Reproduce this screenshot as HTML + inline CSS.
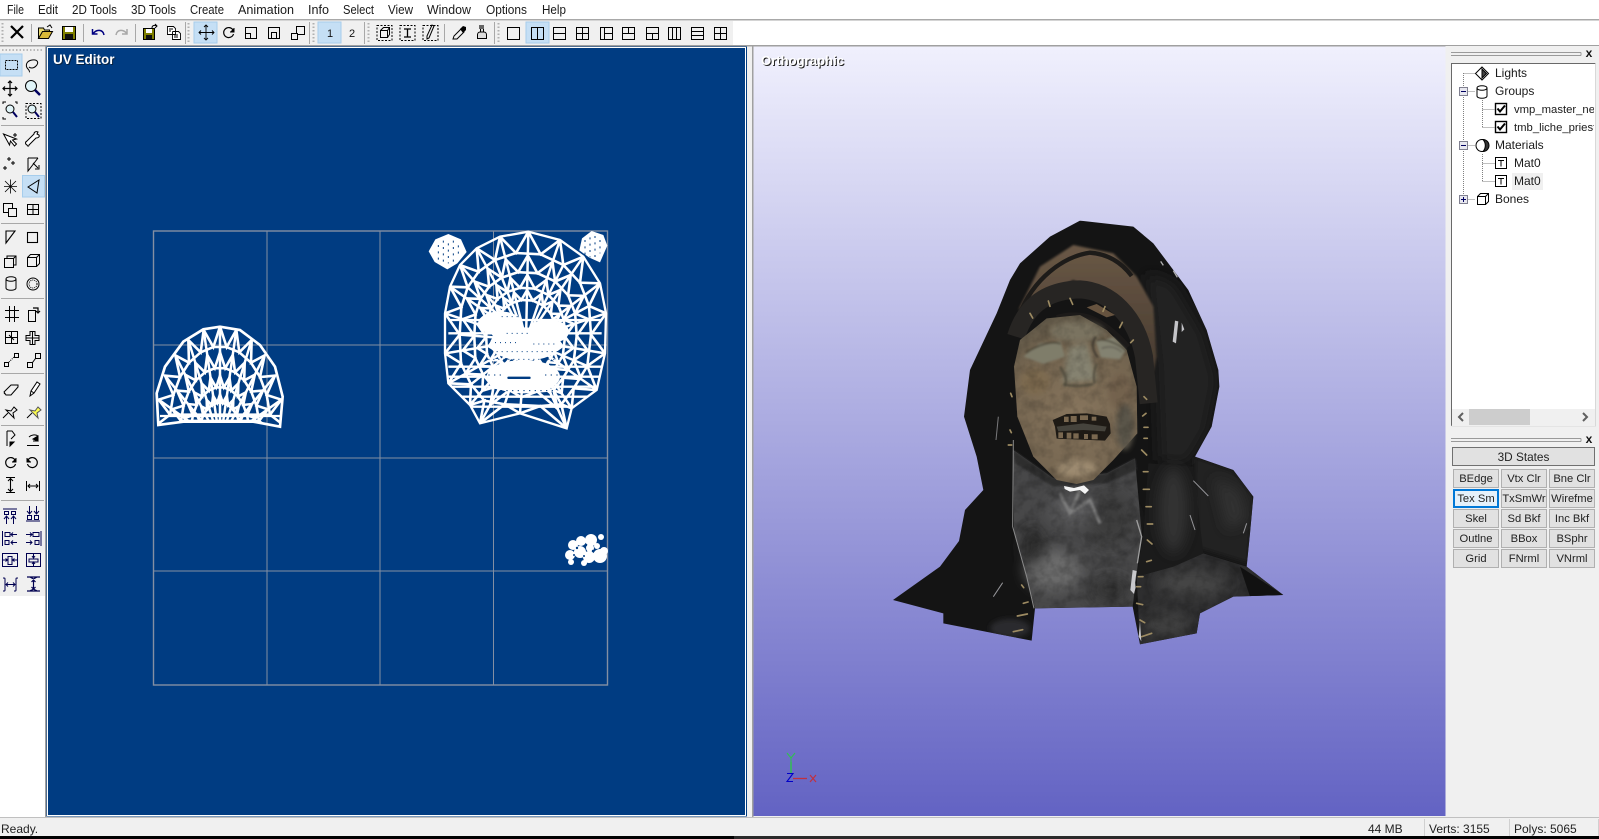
<!DOCTYPE html>
<html><head><meta charset="utf-8"><style>
html,body{margin:0;padding:0;background:#f0f0f0;width:1599px;height:839px;overflow:hidden}
svg{display:block;font-family:"Liberation Sans",sans-serif}
.m{font-size:12.5px;fill:#1a1a1a}
.t{font-size:12px;fill:#1a1a1a}
.s{font-size:11.3px;fill:#1a1a1a}
.b{font-size:11.2px;fill:#222;text-anchor:middle}
.i{fill:none;stroke:#000;stroke-width:1}
</style></head><body>
<svg width="1599" height="839" viewBox="0 0 1599 839" xmlns="http://www.w3.org/2000/svg">
<defs>
<linearGradient id="bg" x1="0" y1="0" x2="0" y2="1"><stop offset="0" stop-color="#f0f0fd"/><stop offset="1" stop-color="#6363c3"/></linearGradient>
<linearGradient id="brown" x1="0" y1="0" x2="0" y2="1"><stop offset="0" stop-color="#6a5846"/><stop offset="1" stop-color="#40352b"/></linearGradient>
<radialGradient id="face" gradientUnits="userSpaceOnUse" cx="410" cy="640" r="320"><stop offset="0" stop-color="#87755d"/><stop offset=".65" stop-color="#746550"/><stop offset="1" stop-color="#5c5546"/></radialGradient>
<filter id="b3" x="-30%" y="-30%" width="160%" height="160%"><feGaussianBlur stdDeviation="3"/></filter>
<filter id="b8" x="-30%" y="-30%" width="160%" height="160%"><feGaussianBlur stdDeviation="8"/></filter>
<filter id="b20" x="-60%" y="-60%" width="220%" height="220%"><feGaussianBlur stdDeviation="20"/></filter>
<filter id="noise" x="0" y="0" width="100%" height="100%"><feTurbulence type="fractalNoise" baseFrequency=".03" numOctaves="3" seed="4"/><feColorMatrix values="0 0 0 0 0  0 0 0 0 0  0 0 0 0 0  2.4 0 0 0 -.95"/></filter>
<clipPath id="sil"><polygon points="420,62 580,80 640,130 700,210 745,270 800,390 835,510 838,560 815,680 765,770 880,810 940,890 930,1000 920,1100 1030,1185 880,1190 780,1240 770,1300 600,1333 578,1220 285,1225 275,1322 10,1270 10,1240 -141,1200 0,1100 57,1023 75,930 130,870 110,770 72,650 90,510 170,340 210,240 240,190 330,110"/></clipPath>
<clipPath id="fc"><polygon points="240,420 320,355 420,345 500,390 560,450 590,560 592,700 520,780 460,840 410,852 350,840 280,770 232,650 222,500"/></clipPath>
<clipPath id="cc"><polygon points="220,750 340,835 500,820 585,775 605,1000 578,1220 285,1225 250,1100 222,1000"/></clipPath>
<clipPath id="dc"><polygon points="590,1130 700,1100 790,1060 920,1100 1030,1185 880,1190 780,1240 770,1300 600,1333"/></clipPath>
<clipPath id="faceclip"><polygon points="325,35 240,50 170,85 120,135 90,200 75,280 75,400 85,490 150,555 180,610 300,580 440,625 455,565 530,510 555,400 558,280 540,190 490,110 420,60"/></clipPath>
<clipPath id="domeclip"><polygon points="55,345 50,250 75,170 130,95 190,58 240,50 300,60 360,105 405,170 428,260 420,350 340,335 240,335 130,335"/></clipPath>
<clipPath id="treeclip"><rect x="1452" y="64" width="142" height="345"/></clipPath>
<path id="dz" fill="none" stroke="#fff" stroke-width="2.600" vector-effect="non-scaling-stroke" d="M50 345L90 314L56 269L100 255L75 197L120 201L106 136L147 158L145 90L182 127L191 60L220 111L240 50L260 111L289 60L298 127L335 90L333 158L374 136L360 201L405 197L380 255L424 269L390 314L430 345"/>
<polygon id="do" points="90,314 100,255 120,201 147,158 182,127 220,111 260,111 298,127 333,158 360,201 380,255 390,314" fill="none" stroke="#fff" stroke-width="2.600" vector-effect="non-scaling-stroke"/>
<path id="fz" fill="none" stroke="#fff" stroke-width="2.600" vector-effect="non-scaling-stroke" d="M325 35L288 99L240 50L225 120L170 85L176 155L120 135L143 202L90 200L124 262L75 280L119 344L75 400L123 430L85 490L153 493L150 555L193 542L180 610L254 553L300 580L361 558L440 625L424 553L455 565L461 505L530 510L502 438L555 400L513 344L558 280L507 258L540 190L480 188L490 110L430 135L420 60L362 103Z"/>
<polygon id="fo" points="288,99 225,120 176,155 143,202 124,262 119,344 123,430 153,493 193,542 254,553 361,558 424,553 461,505 502,438 513,344 507,258 480,188 430,135 362,103" fill="none" stroke="#fff" stroke-width="2.600" vector-effect="non-scaling-stroke"/>
</defs>

<rect width="1599" height="839" fill="#f0f0f0"/>
<!-- menu -->
<rect width="1599" height="45" fill="#fff"/>
<rect y="19" width="1599" height="1.5" fill="#a8a8a8"/>
<g>
<text x="7" y="14" class="m" textLength="17" lengthAdjust="spacingAndGlyphs">File</text><text x="38" y="14" class="m" textLength="20" lengthAdjust="spacingAndGlyphs">Edit</text><text x="72" y="14" class="m" textLength="45" lengthAdjust="spacingAndGlyphs">2D Tools</text><text x="131" y="14" class="m" textLength="45" lengthAdjust="spacingAndGlyphs">3D Tools</text><text x="190" y="14" class="m" textLength="34" lengthAdjust="spacingAndGlyphs">Create</text><text x="238" y="14" class="m" textLength="56" lengthAdjust="spacingAndGlyphs">Animation</text><text x="308" y="14" class="m" textLength="21" lengthAdjust="spacingAndGlyphs">Info</text><text x="343" y="14" class="m" textLength="31" lengthAdjust="spacingAndGlyphs">Select</text><text x="388" y="14" class="m" textLength="25" lengthAdjust="spacingAndGlyphs">View</text><text x="427" y="14" class="m" textLength="44" lengthAdjust="spacingAndGlyphs">Window</text><text x="486" y="14" class="m" textLength="41" lengthAdjust="spacingAndGlyphs">Options</text><text x="542" y="14" class="m" textLength="24" lengthAdjust="spacingAndGlyphs">Help</text>
</g>
<!-- top toolbar -->
<rect y="21" width="733" height="24" fill="#f0f0f0"/>
<rect y="45" width="1599" height="1.5" fill="#a0a0a0"/>
<rect x="194" y="22" width="23" height="21" fill="#c5dff5" stroke="#a6cdec"/>
<rect x="318" y="22" width="23" height="21" fill="#c5dff5" stroke="#a6cdec"/>
<rect x="526" y="22" width="23" height="21" fill="#c5dff5" stroke="#a6cdec"/>
<g fill="#a8a8a8"><rect x="31" y="24" width="1" height="18"/><rect x="83" y="24" width="1" height="18"/><rect x="135" y="24" width="1" height="18"/><rect x="185" y="22" width="1" height="22"/><rect x="309" y="22" width="1" height="22"/><rect x="364" y="22" width="1" height="22"/><rect x="444" y="24" width="1" height="18"/><rect x="494" y="22" width="1" height="22"/></g>
<path d="M2.5 23V43M188.5 23V43M313.5 23V43M368.5 23V43M498.5 23V43" stroke="#b0b0b0" stroke-width="2" stroke-dasharray="1.5 2"/>
<path d="M11 26L23 38M23 26L11 38" stroke="#000" stroke-width="2.2"/>
<path d="M38.5 38.5V28h5l1 2h5v2" fill="#e8d870" stroke="#000"/><path d="M38.5 38.5l4-7h10l-4 7z" fill="#d8b838" stroke="#000"/><path d="M47 27l3-2 2 3" fill="none" stroke="#000"/>
<rect x="62.5" y="26.5" width="13" height="13" fill="#808000" stroke="#000"/><rect x="65" y="27" width="8" height="5" fill="#fff"/><rect x="65" y="34" width="8" height="5" fill="#111"/>
<path d="M92.5 29v5h5M93 34c3-5 10-5 11 1" fill="none" stroke="#000080" stroke-width="1.5"/>
<path d="M127 29v5h-5M127 34c-3-5-10-5-11 1" fill="none" stroke="#a8a8a8" stroke-width="1.5"/>
<rect x="143.5" y="28.5" width="11" height="11" fill="#808000" stroke="#000"/><rect x="146" y="29" width="6" height="4" fill="#fff"/><rect x="146" y="35" width="6" height="4" fill="#111"/><path d="M152 28c0-3 3-3 5-2M155 24l2 2-2 2" fill="none" stroke="#000"/>
<path d="M167.5 26.5h6l2 2v6h-8zM172.5 31.5h6l2 2v6h-8v-8M169 29h4M169 31h2M174 35h4M174 37h4" fill="#fff" stroke="#000" stroke-width=".9"/>
<g class="i"><path d="M206 25V40M199 32.5H214M204 27l2-2 2 2M204 38l2 2 2-2M201 30.5l-2 2 2 2M212 30.5l2 2-2 2" stroke-width=".9"/>
<path d="M233 30a5 5 0 1 0 .5 4" stroke-width="1.200"/><path d="M234 28v4h-4" fill="#000"/>
<rect x="245.5" y="27.5" width="11" height="11"/><path d="M245.5 33.5h5v5"/>
<rect x="268.5" y="27.5" width="11" height="11"/><rect x="271.5" y="32.5" width="5" height="6"/>
<rect x="296.5" y="26.5" width="8" height="8"/><rect x="291.5" y="33.5" width="6" height="6" fill="#f0f0f0"/>
</g>
<text x="330" y="37" font-size="11" text-anchor="middle" fill="#111">1</text><text x="352" y="37" font-size="11" text-anchor="middle" fill="#111">2</text>
<g class="i"><rect x="377" y="25.5" width="15" height="15" stroke-dasharray="2 1.5"/><rect x="380.5" y="30.5" width="7" height="7"/><path d="M380.5 30.5l3-3h6v7l-2 3M387.5 30.5l2-3"/>
<rect x="400" y="25.5" width="15" height="15" stroke-dasharray="2 1.5"/><path d="M404 29h7M404 37h7M407.5 29v8" stroke-width="1.3"/>
<rect x="423" y="25.5" width="15" height="15" stroke-dasharray="2 1.5"/><path d="M434 26l-5 12-2 1v-3l5-11z" stroke-width="1"/>
<path d="M453 39l1-3 7-7 3 3-7 7z"/></g>
<path d="M460 29l3-3 3 1 0 3-3 3z" fill="#000"/>
<path d="M480.5 27h3v5h-3zM477.5 38.5v-4c0-2 2-2.500 2.500-2.500h4c.5 0 2.500.5 2.500 2.500v4z" fill="#dcdcdc" stroke="#000"/><rect x="479" y="25" width="5" height="4" fill="#666"/>
<!-- layouts -->
<g class="i" stroke-width="1.1"><rect x="507.500" y="27.500" width="12" height="12"/>
<rect x="531.500" y="27.500" width="12" height="12"/><path d="M537.500 27.500v12"/>
<rect x="553.500" y="27.500" width="12" height="12"/><path d="M553.500 33.500h12"/>
<rect x="576.500" y="27.500" width="12" height="12"/><path d="M582.500 27.500v12M576.500 33.500h12"/>
<rect x="600.500" y="27.500" width="12" height="12"/><path d="M604.500 27.500v12M604.500 33.500h8"/>
<rect x="622.500" y="27.500" width="12" height="12"/><path d="M628.500 27.500v6M622.500 33.500h12"/>
<rect x="646.500" y="27.500" width="12" height="12"/><path d="M646.500 33.500h12M652.500 33.500v6"/>
<rect x="668.500" y="27.500" width="12" height="12"/><path d="M672.500 27.500v12M676.500 27.500v12"/>
<rect x="691.500" y="27.500" width="12" height="12"/><path d="M691.500 31.500h12M691.500 35.500h12"/>
<rect x="714.500" y="27.500" width="12" height="12"/><path d="M720.500 27.500v12M714.500 33.500h12"/></g>

<!-- left toolbar -->
<rect x="0" y="47" width="45" height="549" fill="#f0f0f0"/>
<rect x="0" y="596" width="45" height="222" fill="#fff"/>
<rect x="45" y="46" width="1.500" height="772" fill="#a0a0a0"/>
<path d="M2 50H43" stroke="#b8b8b8" stroke-width="2" stroke-dasharray="1.500 2"/>
<rect x="0" y="54" width="22" height="22" fill="#c5dff5" stroke="#a6cdec"/>
<rect x="22.500" y="175.500" width="22" height="21.500" fill="#c5dff5" stroke="#a6cdec"/>
<g fill="#a8a8a8"><rect x="1" y="125" width="43" height="1"/><rect x="1" y="223" width="43" height="1"/><rect x="1" y="298" width="43" height="1"/><rect x="1" y="373" width="43" height="1"/><rect x="1" y="425" width="43" height="1"/><rect x="1" y="500" width="43" height="1"/></g>
<g class="i" stroke-width=".9">
<rect x="5.500" y="60.500" width="12" height="9" stroke-dasharray="2 1"/>
<path d="M28 69c-3-3-2-8 4-9s7 3 4 6-6 2-7 1M28 69c1 1 2 3 1 3"/>
<path d="M10 81V96M3 88.500H17M8 83l2-2 2 2M8 94l2 2 2-2M5 86.500l-2 2 2 2M15 86.500l2 2-2 2" stroke-width="1.200"/>
<circle cx="31" cy="86" r="5.500" fill="#e0f4f8"/><path d="M35 90l5 5" stroke="#000060" stroke-width="2.500"/>
<path d="M3 104v-2h3M15 102h2v2M3 117v2h3"/><circle cx="10" cy="109" r="4" fill="#e0f4f8"/><path d="M13 112l4 5" stroke="#000060" stroke-width="2"/>
<rect x="26" y="103.500" width="15" height="15" stroke-dasharray="2 1.500"/><circle cx="32" cy="109" r="4" fill="#e0f4f8"/><path d="M35 112l4 5" stroke="#000060" stroke-width="2"/>
<path d="M3.500 134l6 11 1-4 4 5 2-2-4-4 4-1z" fill="#fff"/><path d="M13 135h4M15 133v4"/>
<path d="M27 145c-2-1-2-3 0-4l7-7c0-2 2-3 4-2l-1 2 2 1c1 2-1 3-3 3l-7 7c0 1-1 2-2 0z" fill="#fff"/>
<path d="M9 157v4M7 159h4M13 161v4M11 163h4M5 166v4M3 168h4" stroke-width="1"/>
<path d="M28 158h10M28 158v13l10-13M33 163l5 5M35 169h4v-4" stroke-width="1"/>
<path d="M5 181l11 11M16 181L5 192M10.500 179.500v14M4 186.500h13" stroke-width=".8"/>
<path d="M28 187l11-7-2 13z"/>
<rect x="3.500" y="203.500" width="9" height="9" fill="none"/><rect x="8.500" y="208.500" width="8" height="8" fill="#f0f0f0"/>
<rect x="27.500" y="204.500" width="11" height="10"/><path d="M33 204.500v10M27.500 209.500h11"/>
<path d="M6 243l9-12H6z" stroke-width="1.100"/><rect x="27.500" y="232.500" width="10" height="10" stroke-width="1.100"/>
<rect x="4.500" y="258.500" width="9" height="9"/><path d="M7 258.500v-2.500h9v9h-2.500M13.500 258.500l2.500-2.500" /><rect x="27.500" y="257.500" width="9" height="9"/><path d="M27.500 257.500l3-3h9v9l-3 3M36.500 257.500l3-3"/>
<path d="M6 279c0-3 10-3 10 0v9c0 3-10 3-10 0zM6 279c0 3 10 3 10 0"/><circle cx="33" cy="284" r="6"/><circle cx="33" cy="284" r="4" stroke-dasharray="1 1" />
<path d="M9.500 306v16M14.500 306v16M5 310.500h14M5 317.500h14"/>
<rect x="28.500" y="310.500" width="7" height="11"/><path d="M33 308h5v4M36 311l2 2 2-2" stroke-width="1.200"/>
<rect x="5.500" y="331.500" width="12" height="12"/><path d="M11.500 331.500v12M5.500 337.500h12M9 335l5 5"/>
<path d="M30 331.500h5v4h4v5h-4v4h-5v-4h-4v-5h4zM32.500 331.500v13M26 338h13"/>
<rect x="4.500" y="362.500" width="4" height="4"/><rect x="14.500" y="353.500" width="4" height="4"/><path d="M9 362l5-5" stroke-dasharray="1 1"/>
<rect x="27.500" y="362.500" width="5" height="5"/><rect x="35.500" y="353.500" width="5" height="5"/><path d="M32.500 362.500l3-4"/>
<path d="M4 392l7-7h7v2l-7 8H6z"/><path d="M4 393l1 1"/>
<path d="M30 396l1-5 6-9 3 2-6 9z" fill="#fff"/><path d="M31 391l3 2"/>
<path d="M3 418l5-5M6 410l5 1 3-4 3 3-4 3 1 5z"/>
<path d="M27 418l5-5" /><path d="M30 410l5 1 3-4 3 3-4 3 1 5z" fill="#ffff50" stroke="#555"/>
<path d="M7 431v15M7 431h5l3 4-4 4"/><path d="M14 442l-4 4v-4z" fill="#000" /><path d="M27 445.500h12M29 437c2-2 6-3 9-1v5h-5"/><path d="M38 441l-5-2 5-3z" fill="#000"/>
<path d="M15 460a5 5 0 1 0 .5 4" stroke-width="1.200"/><path d="M16 458v4h-4" fill="#000"/>
<path d="M28 460a5 5 0 1 1 -.5 4" stroke-width="1.200"/><path d="M27 458v4h4" fill="#000"/>
<path d="M6 477.500h9M6 492.500h9M10.500 479v12M8 481l2.500-2.500L13 481M8 489l2.500 2.500L13 489" stroke-width="1.100"/>
<path d="M26.500 481v10M39.500 481v10M28 486h10M30 484l-2 2 2 2M36 484l2 2-2 2" stroke="#000" stroke-width="1"/>
</g>
<g fill="none" stroke="#000050" stroke-width="1">
<path d="M3 509h14M4.500 511.500h4v3h-4zM11.500 511.500h4v3h-4zM6.500 524v-7M4 519l2.500-3 2.500 3M13.500 524v-7M11 519l2.500-3 2.500 3"/>
<path d="M26 521h14M27.500 515.500h4v4h-4zM34.500 515.500h4v4h-4zM29.500 506v7M27 511l2.500 3 2.500-3M36.500 506v7M34 511l2.500 3 2.500-3"/>
<path d="M2.500 531v15M5 532.500h5v4H5zM5 540.500h4v4H5zM17 534.500h-6M13 532.500l-2 2 2 2M17 542.500h-6M13 540.500l-2 2 2 2"/>
<path d="M41 531v15M33 532.500h6v4h-6zM35 540.500h4v4h-4zM26 534.500h6M30 532.500l2 2-2 2M26 542.500h6M30 540.500l2 2-2 2"/>
<rect x="2.500" y="553.500" width="15" height="13"/><rect x="8" y="556.500" width="4" height="8"/><path d="M3 560h4M5.500 558.500l2 1.500-2 1.500M17 560h-4M14.500 558.500l-2 1.500 2 1.500"/>
<rect x="26.500" y="553.500" width="14" height="13"/><path d="M29 559h9v3h-9zM33.500 554v4M32 556l1.500 2 1.500-2M33.500 566v-4M32 564l1.500-2 1.500 2"/>
<path d="M3 578c2 0 2 0 2 1v11c0 1 0 1-2 1M18 578c-2 0-2 0-2 1v11c0 1 0 1-2 1M6 584.500h9M8 582.500l-2 2 2 2M13 582.500l2 2-2 2"/>
<path d="M27 577h13M27 591h13M30 577c1 1 3 1 3 2M37 577c-1 1-3 1-3 2M33.500 580v9M31.500 582l2-2 2 2M31.500 587l2 2 2-2M30 591c1-1 3-1 3-2M37 591c-1-1-3-1-3-2" stroke-width="1.200"/>
</g>

<!-- UV editor -->
<rect x="46.500" y="46.500" width="700.500" height="770" fill="#003c82"/>
<rect x="47.500" y="47.500" width="698" height="768" fill="none" stroke="#fff"/>
<text x="53" y="64" font-size="13.500" font-weight="bold" fill="#111" transform="translate(1 1)" opacity=".6">UV Editor</text>
<text x="53" y="64" font-size="13.500" font-weight="bold" fill="#fff">UV Editor</text>
<g stroke="#838fa3" fill="none"><rect x="153.500" y="231" width="454" height="454" stroke-width="1.400"/><path d="M267 231V685M380 231V685M493.500 231V685M153 345H607M153 458H607M153 571H607" stroke-width="1"/></g>

<!-- small dome -->
<g transform="translate(140,310) scale(.33333)">
<g clip-path="url(#domeclip)">
<path fill="none" stroke="#fff" stroke-width="7.500" d="M240 400L50 345M240 400L56 269M240 400L75 197M240 400L106 136M240 400L145 90M240 400L191 60M240 400V50M240 400L289 60M240 400L335 90M240 400L374 136M240 400L405 197M240 400L424 269M240 400L430 345"/>
<use href="#dz"/>
<use href="#do"/>
<use href="#dz" transform="translate(240 400) scale(.78) translate(-240 -400)"/>
<use href="#do" transform="translate(240 400) scale(.78) translate(-240 -400)"/>
<use href="#dz" transform="translate(240 400) scale(.58) translate(-240 -400)"/>
<use href="#do" transform="translate(240 400) scale(.58) translate(-240 -400)"/>
<use href="#dz" transform="translate(240 400) scale(.42) translate(-240 -400)"/>
<use href="#do" transform="translate(240 400) scale(.42) translate(-240 -400)"/>
<path d="M60 318H420" stroke="#fff" stroke-width="7"/>
</g>
<polygon points="55,345 50,250 75,170 130,95 190,58 240,50 300,60 360,105 405,170 428,260 420,350 340,335 240,335 130,335" fill="none" stroke="#fff" stroke-width="8"/>
</g>

<!-- face mesh -->
<g transform="translate(420,220) scale(.33333)">
<g clip-path="url(#faceclip)">
<path fill="none" stroke="#fff" stroke-width="7.500" d="M318 360L325 35M318 360L240 50M318 360L170 85M318 360L120 135M318 360L90 200M318 360L75 280M318 360L75 400M318 360L85 490M318 360L150 555M318 360L180 610M318 360L300 580M318 360L440 625M318 360L455 565M318 360L530 510M318 360L555 400M318 360L558 280M318 360L540 190M318 360L490 110M318 360L420 60M318 360L225 120M318 360L143 202M318 360L119 344M318 360L153 493M318 360L254 553M318 360L424 553M318 360L502 438M318 360L507 258M318 360L430 135"/>
<use href="#fz"/>
<use href="#fo"/>
<use href="#fz" transform="translate(318 360) scale(.78) translate(-318 -360)"/>
<use href="#fo" transform="translate(318 360) scale(.78) translate(-318 -360)"/>
<use href="#fz" transform="translate(318 360) scale(.6) translate(-318 -360)"/>
<use href="#fo" transform="translate(318 360) scale(.6) translate(-318 -360)"/>
<use href="#fz" transform="translate(318 360) scale(.46) translate(-318 -360)"/>
<use href="#fo" transform="translate(318 360) scale(.46) translate(-318 -360)"/>
<path d="M85 300H545M85 340H545M85 440H545M85 470H545M90 500H540M110 530H510M140 560H470" stroke="#fff" stroke-width="7"/>
<ellipse cx="240" cy="310" rx="66" ry="36" fill="#fff"/>
<ellipse cx="385" cy="335" rx="62" ry="36" fill="#fff"/>
<ellipse cx="315" cy="372" rx="105" ry="50" fill="#fff"/>
<ellipse cx="310" cy="470" rx="110" ry="50" fill="#fff"/>
<path d="M215 395H420M205 418H430M225 368H300M340 372H410M245 290H300M260 340H330" stroke="#003c82" stroke-width="3" stroke-dasharray="3 12" fill="none"/>
<path d="M225 512H400M375 465H415M205 465H245" stroke="#003c82" stroke-width="3" stroke-dasharray="4 13" fill="none"/>
</g>
<polygon points="325,35 240,50 170,85 120,135 90,200 75,280 75,400 85,490 150,555 180,610 300,580 440,625 455,565 530,510 555,400 558,280 540,190 490,110 420,60" fill="none" stroke="#fff" stroke-width="7"/>
<rect x="262" y="470" width="70" height="7" rx="3" fill="#003c82"/>
<path d="M85 42l38 16 17 38-28 34-30 18-38-22-18-32 20-36z" fill="#fff"/>
<path d="M515 33l35 12 12 32-22 50-32-14-30-22 8-36z" fill="#fff"/>
<g stroke="#003c82" stroke-width="3" stroke-dasharray="6 13"><path d="M55 75v50M70 62v70M85 70v60M100 62v66M115 76v36M495 60v50M510 52v60M525 48v65M540 60v40"/></g>
</g>
<g fill="#fff"><circle cx="573" cy="545" r="5"/><circle cx="581" cy="541" r="5"/><circle cx="591" cy="540" r="6"/><circle cx="601" cy="537" r="3"/><circle cx="570" cy="555" r="5"/><circle cx="580" cy="552" r="6"/><circle cx="589" cy="557" r="6"/><circle cx="600" cy="556" r="7"/><circle cx="604" cy="551" r="4"/><circle cx="590" cy="548" r="4"/><circle cx="571" cy="562" r="3"/><circle cx="584" cy="563" r="3"/><circle cx="597" cy="546" r="3"/></g>
<g fill="#003c82"><circle cx="577" cy="548" r="1.200"/><circle cx="586" cy="545" r="1.200"/><circle cx="574" cy="555" r="1"/><circle cx="593" cy="551" r="1.200"/><circle cx="584" cy="556" r="1"/></g>

<!-- ortho -->
<rect x="752" y="46" width="1.500" height="771" fill="#a0a0a0"/>
<rect x="753.500" y="46.500" width="692" height="769.500" fill="url(#bg)"/>
<text x="762" y="66" font-size="13" font-weight="bold" fill="#222" textLength="83" lengthAdjust="spacingAndGlyphs">Orthographic</text>
<text x="761" y="65" font-size="13" font-weight="bold" fill="#fff" textLength="83" lengthAdjust="spacingAndGlyphs">Orthographic</text>

<!-- head -->
<g transform="translate(940,200) scale(.33333)">
<g clip-path="url(#sil)">
<rect x="-200" y="0" width="1300" height="1400" fill="#141414"/>
<polygon points="620,220 700,250 790,400 830,540 800,690 740,790 660,780 650,500" fill="#222223" filter="url(#b20)"/>
<polygon points="765,770 880,810 940,890 925,1090 760,1040" fill="#232323" filter="url(#b8)"/>
<polygon points="820,830 900,870 925,960 860,990" fill="#323232" filter="url(#b20)"/>
<!-- brown -->
<polygon points="235,330 300,200 400,135 520,160 590,230 640,320 650,470 625,590 600,400 500,290 400,240 280,300" fill="url(#brown)" filter="url(#b3)"/>
<path d="M238 345C280 235 370 170 450 158C505 162 545 188 575 228" fill="none" stroke="#1d1b19" stroke-width="13"/>
<!-- face-band -->
<path d="M228 410C262 300 340 270 420 268C510 272 590 350 612 470L626 610" fill="none" stroke="#272523" stroke-width="54"/>
<polygon points="440,322 470,312 525,345 500,352" fill="#66533f"/>
<path d="M350 352C420 332 480 345 565 440" fill="none" stroke="#1c1a19" stroke-width="14"/>
<!-- chest -->
<polygon points="220,750 340,835 500,820 585,775 605,1000 578,1220 285,1225 250,1100 222,1000" fill="#484849"/>
<g filter="url(#b20)"><ellipse cx="340" cy="1110" rx="85" ry="60" fill="#6c6c6c"/><ellipse cx="510" cy="960" rx="70" ry="80" fill="#3c3c3e"/><ellipse cx="280" cy="1040" rx="35" ry="60" fill="#2a2a2b"/><ellipse cx="400" cy="930" rx="70" ry="40" fill="#5e5e60"/><ellipse cx="510" cy="1170" rx="60" ry="40" fill="#343436"/></g>
<path d="M360 880l30 60 60-40 30 70M420 870l-30 70" fill="none" stroke="#7e7e7e" stroke-width="9" filter="url(#b3)"/>
<polygon points="220,750 340,835 500,820 585,775 590,810 500,850 340,860 225,790" fill="#2d2d2f" filter="url(#b3)"/>
<g clip-path="url(#cc)"><rect x="220" y="770" width="390" height="460" filter="url(#noise)" opacity=".22"/></g>
<path d="M220 720L218 980 260 1130 282 1225" fill="none" stroke="#8a8a8a" stroke-width="3"/>
<path d="M590 960L605 1010 592 1090" fill="none" stroke="#9e9e9e" stroke-width="4"/>
<!-- face -->
<polygon points="240,420 320,355 420,345 500,390 560,450 590,560 592,700 520,780 460,840 410,852 350,840 280,770 232,650 222,500" fill="url(#face)"/>
<g filter="url(#b8)">
<ellipse cx="410" cy="395" rx="80" ry="30" fill="#7a7361"/>
<ellipse cx="285" cy="545" rx="45" ry="40" fill="#7d6a50"/><ellipse cx="540" cy="575" rx="35" ry="55" fill="#73624e"/>
<ellipse cx="410" cy="805" rx="60" ry="26" fill="#9c8a70"/>
<ellipse cx="555" cy="680" rx="26" ry="70" fill="#5a5448"/>
<polygon points="385,440 440,430 472,540 368,550" fill="#85826f"/>
</g>
<g clip-path="url(#fc)"><rect x="220" y="345" width="375" height="510" filter="url(#noise)" opacity=".16"/></g>
<g filter="url(#b3)">
<polygon points="250,470 300,430 362,425 375,470 310,492" fill="#7f7d6b"/>
<polygon points="468,425 520,412 558,448 540,478 482,472" fill="#838271"/>
<path d="M258 458C300 432 340 422 362 432M472 422C492 414 530 428 558 452" fill="none" stroke="#3a3428" stroke-width="4"/>
<path d="M485 445C510 436 530 442 545 456" fill="none" stroke="#5c594f" stroke-width="4"/>
<path d="M360 500c20 30 20 40 15 60M470 490c-10 30-10 50-5 60M370 552c30 10 70 5 90 0" fill="none" stroke="#4d483a" stroke-width="6"/>
<path d="M468 410C453 430 456 450 473 472" fill="none" stroke="#35302a" stroke-width="5"/>
</g>
<!-- mouth -->
<polygon points="338,660 380,642 440,640 500,650 510,672 512,700 495,722 350,716 345,680" fill="#1e1a15"/>
<g fill="#7a6850"><rect x="372" y="650" width="14" height="16"/><rect x="392" y="648" width="18" height="18"/><rect x="420" y="646" width="24" height="14"/><rect x="455" y="650" width="14" height="12"/><rect x="380" y="698" width="14" height="18"/><rect x="400" y="700" width="16" height="16"/><rect x="432" y="702" width="12" height="15"/><rect x="455" y="703" width="18" height="15"/><rect x="355" y="697" width="14" height="17"/></g>
<polygon points="350,680 430,670 500,680 495,694 430,690 355,694" fill="#45433c"/>
<!-- drapes -->
<polygon points="590,1130 700,1100 790,1060 920,1100 1030,1185 880,1190 780,1240 770,1300 600,1333" fill="#2e2e2f"/>
<g filter="url(#b20)"><ellipse cx="760" cy="1150" rx="110" ry="45" fill="#444445"/><ellipse cx="680" cy="1270" rx="70" ry="40" fill="#404041"/></g>
<g clip-path="url(#dc)"><rect x="590" y="1050" width="450" height="290" filter="url(#noise)" opacity=".2"/></g>
<polygon points="625,790 760,800 790,1060 700,1100 590,1130 610,1000" fill="#1b1b1b"/>
<ellipse cx="700" cy="930" rx="45" ry="130" fill="#303032" filter="url(#b20)"/>
<ellipse cx="210" cy="1285" rx="60" ry="28" fill="#2c2c2d" filter="url(#b8)"/>
<polygon points="930,1190 1030,1185 900,1100" fill="#111"/>
<!-- highlights -->
<path d="M705 362l10 2-7 66-10-5zM725 368l8 20-8 8z" fill="#c4c4c8"/>
<path d="M662 184l8 12M700 212l12 20" stroke="#b0b0b0" stroke-width="4"/>
<path d="M372 858l30 6 30-8 15 14-12 12-15-12-30 5-16-8z" fill="#f4f4f4"/>
<path d="M760 842l45 46M750 945l15 45M910 1000l10-30M160 1190l28-42" stroke="#96969a" stroke-width="3"/>
<path d="M175 650l-7 70" stroke="#7a7a7c" stroke-width="3"/>
<path d="M578 1110l-7 60 11 12 5-20-2-14 5-35zM600 1265l-4 45 8 14z" fill="#c8c8cc"/>
<!-- stitches -->
<g stroke="#9d8b62" stroke-width="5" stroke-linecap="round"><path d="M270 340l8 14M325 303l5 16M390 295l8 18M495 320l-6 14M547 367l-8 16M580 420l-8 8M612 590l8 8M618 640l-10 8M612 682h12M612 715h10M605 750l15 15M610 815h14M610 868h18M618 920h16M622 972h16M622 1020l14 12M620 1085l14-4M595 1130l14 0M590 1160h12M590 1210l18 4M600 1260l14 8M605 1310l30-10M250 1210l14-4M232 1248l30-6M220 1295l28-6M245 1155l6 8M210 690l4 8M205 735h10M212 580l4 10"/></g>
</g>
</g>

<!-- axis -->
<path d="M791 762V773" stroke="#30c050" stroke-width="1.500"/>
<path d="M787 753l4 5 4-5M791 758v4" fill="none" stroke="#30c050" stroke-width="1.100"/>
<path d="M787 773.500h6l-6 8h6" fill="none" stroke="#0000c8" stroke-width="1.100"/>
<path d="M793 778.500H807" stroke="#c03040" stroke-width="1.300"/>
<path d="M810 775l6 7M816 775l-6 7" stroke="#c03040" stroke-width="1.200"/>

<!-- right panel -->
<rect x="1445.500" y="46" width="153.500" height="772" fill="#f0f0f0"/>
<path d="M1451 52.500H1581M1451 55.500H1581M1581 52.500V55.500M1451 438.500H1581M1451 441.500H1581M1581 438.500V441.500" stroke="#9a9a9a" fill="none"/>
<text x="1589" y="57" font-size="12" font-weight="bold" text-anchor="middle" fill="#111">x</text>
<text x="1589" y="443" font-size="12" font-weight="bold" text-anchor="middle" fill="#111">x</text>
<rect x="1451.500" y="63.500" width="144" height="362" fill="#fff"/>
<path d="M1451.500 426V63.500H1595.500" fill="none" stroke="#696969"/>
<path d="M1595.500 63.500V426H1451.500" fill="none" stroke="#d8d8d8"/>
<!-- tree -->
<g stroke="#808080" stroke-dasharray="1 1" fill="none"><path d="M1463.500 73V199M1463.500 73.500H1475M1463.500 91.500H1475M1463.500 145.500H1475M1463.500 199.500H1475M1482.500 100V127M1482.500 109.500H1495M1482.500 127.500H1495M1482.500 154V181M1482.500 163.500H1495M1482.500 181.500H1495"/></g>
<g fill="#e8e8f0" stroke="#808090"><rect x="1459.500" y="87.500" width="8" height="8"/><rect x="1459.500" y="141.500" width="8" height="8"/><rect x="1459.500" y="195.500" width="8" height="8"/></g>
<path d="M1461 91.500h5M1461 145.500h5M1461 199.500h5M1463.500 197v5" stroke="#000060"/>
<rect x="1512" y="173" width="31" height="17" fill="#f0f0f0"/>
<g class="i" stroke-width=".9">
<path d="M1482 67l6.500 6.500-6.500 6.500-6.500-6.500z"/><path d="M1482 69l4.500 4.500-4.500 4.500z" fill="#444"/>
<path d="M1477 88c0-3 10-3 10 0v8c0 3-10 3-10 0zM1477 88c0 3 10 3 10 0"/>
<circle cx="1482" cy="145.500" r="6"/><path d="M1483 139.500a6 6 0 0 1 0 12a9 9 0 0 0 0-12z" fill="#333"/>
<rect x="1477.500" y="196.500" width="8" height="8"/><path d="M1477.500 196.500l3-3h8v8l-3 3M1485.500 196.500l3-3"/>
<rect x="1495.500" y="103.500" width="11" height="11" stroke-width="1.400"/><rect x="1495.500" y="121.500" width="11" height="11" stroke-width="1.400"/>
<path d="M1497.500 108.500l2.500 3 5-6M1497.500 126.500l2.500 3 5-6" stroke-width="2"/>
<rect x="1495.500" y="157.500" width="11" height="11"/><rect x="1495.500" y="175.500" width="11" height="11"/>
<path d="M1498 160.500h6M1501 160.500v6M1498 178.500h6M1501 178.500v6"/>
</g>
<g clip-path="url(#treeclip)">
<text x="1495" y="77" class="t">Lights</text><text x="1495" y="95" class="t">Groups</text>
<text x="1514" y="113" class="s">vmp_master_new</text><text x="1514" y="131" class="s">tmb_liche_priest</text>
<text x="1495" y="149" class="t">Materials</text><text x="1514" y="167" class="t">Mat0</text><text x="1514" y="185" class="t">Mat0</text><text x="1495" y="203" class="t">Bones</text>
</g>
<!-- scrollbar -->
<rect x="1452" y="409" width="143" height="17" fill="#f0f0f0"/>
<rect x="1469" y="409" width="61" height="16" fill="#cdcdcd"/>
<path d="M1463 413l-4 4 4 4M1583 413l4 4-4 4" fill="none" stroke="#606060" stroke-width="2"/>
<!-- buttons -->
<rect x="1452.500" y="447.500" width="142" height="18" fill="#e1e1e1" stroke="#707070"/>
<text x="1523.500" y="461" class="b" style="font-size:11.800px">3D States</text>
<g fill="#e1e1e1" stroke="#b0b0b0">
<rect x="1453.500" y="469.500" width="45" height="18"/><rect x="1501.500" y="469.500" width="45" height="18"/><rect x="1549.500" y="469.500" width="45" height="18"/>
<rect x="1501.500" y="489.500" width="45" height="18"/><rect x="1549.500" y="489.500" width="45" height="18"/>
<rect x="1453.500" y="509.500" width="45" height="18"/><rect x="1501.500" y="509.500" width="45" height="18"/><rect x="1549.500" y="509.500" width="45" height="18"/>
<rect x="1453.500" y="529.500" width="45" height="18"/><rect x="1501.500" y="529.500" width="45" height="18"/><rect x="1549.500" y="529.500" width="45" height="18"/>
<rect x="1453.500" y="549.500" width="45" height="18"/><rect x="1501.500" y="549.500" width="45" height="18"/><rect x="1549.500" y="549.500" width="45" height="18"/>
</g>
<rect x="1454" y="490" width="44" height="17" fill="#e5f1fb" stroke="#0078d7" stroke-width="2"/>
<text x="1476" y="482" class="b">BEdge</text><text x="1524" y="482" class="b">Vtx Clr</text><text x="1572" y="482" class="b">Bne Clr</text>
<text x="1476" y="502" class="b">Tex Sm</text><text x="1524" y="502" class="b">TxSmWr</text><text x="1572" y="502" class="b">Wirefme</text>
<text x="1476" y="522" class="b">Skel</text><text x="1524" y="522" class="b">Sd Bkf</text><text x="1572" y="522" class="b">Inc Bkf</text>
<text x="1476" y="542" class="b">Outlne</text><text x="1524" y="542" class="b">BBox</text><text x="1572" y="542" class="b">BSphr</text>
<text x="1476" y="562" class="b">Grid</text><text x="1524" y="562" class="b">FNrml</text><text x="1572" y="562" class="b">VNrml</text>

<!-- status -->
<rect x="0" y="817" width="1599" height="1.200" fill="#c0c0c0"/>
<rect x="0" y="818" width="1599" height="18" fill="#f0f0f0"/>
<text x="1" y="833" font-size="12" fill="#222">Ready.</text>
<text x="1368" y="833" font-size="12" fill="#222">44 MB</text>
<text x="1429" y="833" font-size="12" fill="#222">Verts: 3155</text>
<text x="1514" y="833" font-size="12" fill="#222">Polys: 5065</text>
<path d="M1424.500 819V836M1509.500 819V836M1598.500 819V836" stroke="#d0d0d0"/>
<rect x="0" y="836" width="1599" height="3" fill="#000"/>
<rect x="734" y="836" width="566" height="3" fill="#2a2a2a"/>
</svg>
</body></html>
